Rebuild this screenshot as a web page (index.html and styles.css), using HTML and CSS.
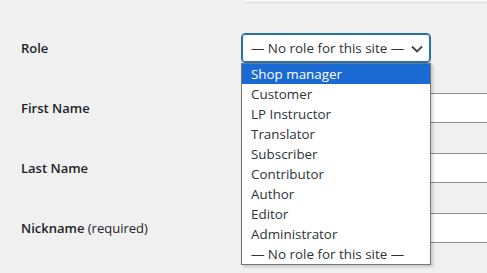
FILE: index.html
```html
<!DOCTYPE html>
<html lang="en">
<head>
<meta charset="utf-8">
<title>Profile</title>
<link rel="stylesheet" href="styles.css">
</head>
<body>
<div class="page">
  <div class="top-edge"></div>
  <div class="form">
    <div class="row">
      <div class="label">Role</div>
      <div class="field">
        <div class="select">
          <span class="select-text">— No role for this site —</span>
          <svg class="chevron" width="12" height="8" viewBox="0 0 12 8"><path d="M1 1.5 L6 6.5 L11 1.5" fill="none" stroke="#3c434a" stroke-width="1.8"/></svg>
          <ul class="menu">
            <li class="active">Shop manager</li>
            <li>Customer</li>
            <li>LP Instructor</li>
            <li>Translator</li>
            <li>Subscriber</li>
            <li>Contributor</li>
            <li>Author</li>
            <li>Editor</li>
            <li>Administrator</li>
            <li>— No role for this site —</li>
          </ul>
        </div>
      </div>
    </div>
    <div class="row">
      <div class="label">First Name</div>
      <div class="field"><div class="input"></div></div>
    </div>
    <div class="row">
      <div class="label">Last Name</div>
      <div class="field"><div class="input"></div></div>
    </div>
    <div class="row">
      <div class="label">Nickname <span class="req">(required)</span></div>
      <div class="field"><div class="input"></div></div>
    </div>
  </div>
</div>
</body>
</html>
```

FILE: styles.css
```css
html, body {
  margin: 0;
  padding: 0;
}
body {
  background: #f0f0f1;
  font-family: "Segoe UI", "Open Sans", "Noto Sans", sans-serif;
  color: #1d2327;
  width: 487px;
  height: 273px;
  overflow: hidden;
}
.page {
  width: 487px;
}
.top-edge {
  margin-left: 244px;
  height: 2px;
  background: #f6f7f7;
  border-bottom: 1px solid #dcdcde;
}
.form {
  padding-top: 15px;
  padding-left: 21px;
}
.row {
  display: flex;
  align-items: center;
  height: 60px;
}
.label {
  width: 220px;
  flex: none;
  font-size: 13px;
  font-weight: 600;
  line-height: 20px;
  color: #1d2327;
}
.req {
  font-weight: 400;
}
.field {
  flex: 1;
  min-width: 0;
}
.input {
  height: 28px;
  background: #fff;
  border: 1px solid #8c8f94;
  border-right: none;
  border-radius: 4px 0 0 4px;
}
.select {
  position: relative;
  height: 28px;
  width: 179px;
  background: #fff;
  border: 1px solid #2271b1;
  box-shadow: inset 0 0 0 1px #2271b1;
  border-radius: 4px;
  display: flex;
  align-items: center;
  padding-left: 9px;
  box-sizing: content-box;
  z-index: 2;
}
.select-text {
  font-size: 13.4px;
  color: #2c3338;
  flex: 1;
  white-space: nowrap;
}
.chevron {
  margin-right: 7px;
  margin-top: 1px;
}
.menu {
  position: absolute;
  left: -1px;
  top: 29px;
  width: 188px;
  margin: 0;
  padding: 0;
  list-style: none;
  background: #fff;
  border: 1px solid #767676;
  box-shadow: 2px 2px 3px rgba(0, 0, 0, 0.18);
}
.menu li {
  height: 20px;
  line-height: 20px;
  padding-left: 9px;
  font-size: 13.4px;
  color: #2c3338;
  white-space: nowrap;
}
.menu li.active {
  background: #1b6ad4;
  color: #fff;
}
```
